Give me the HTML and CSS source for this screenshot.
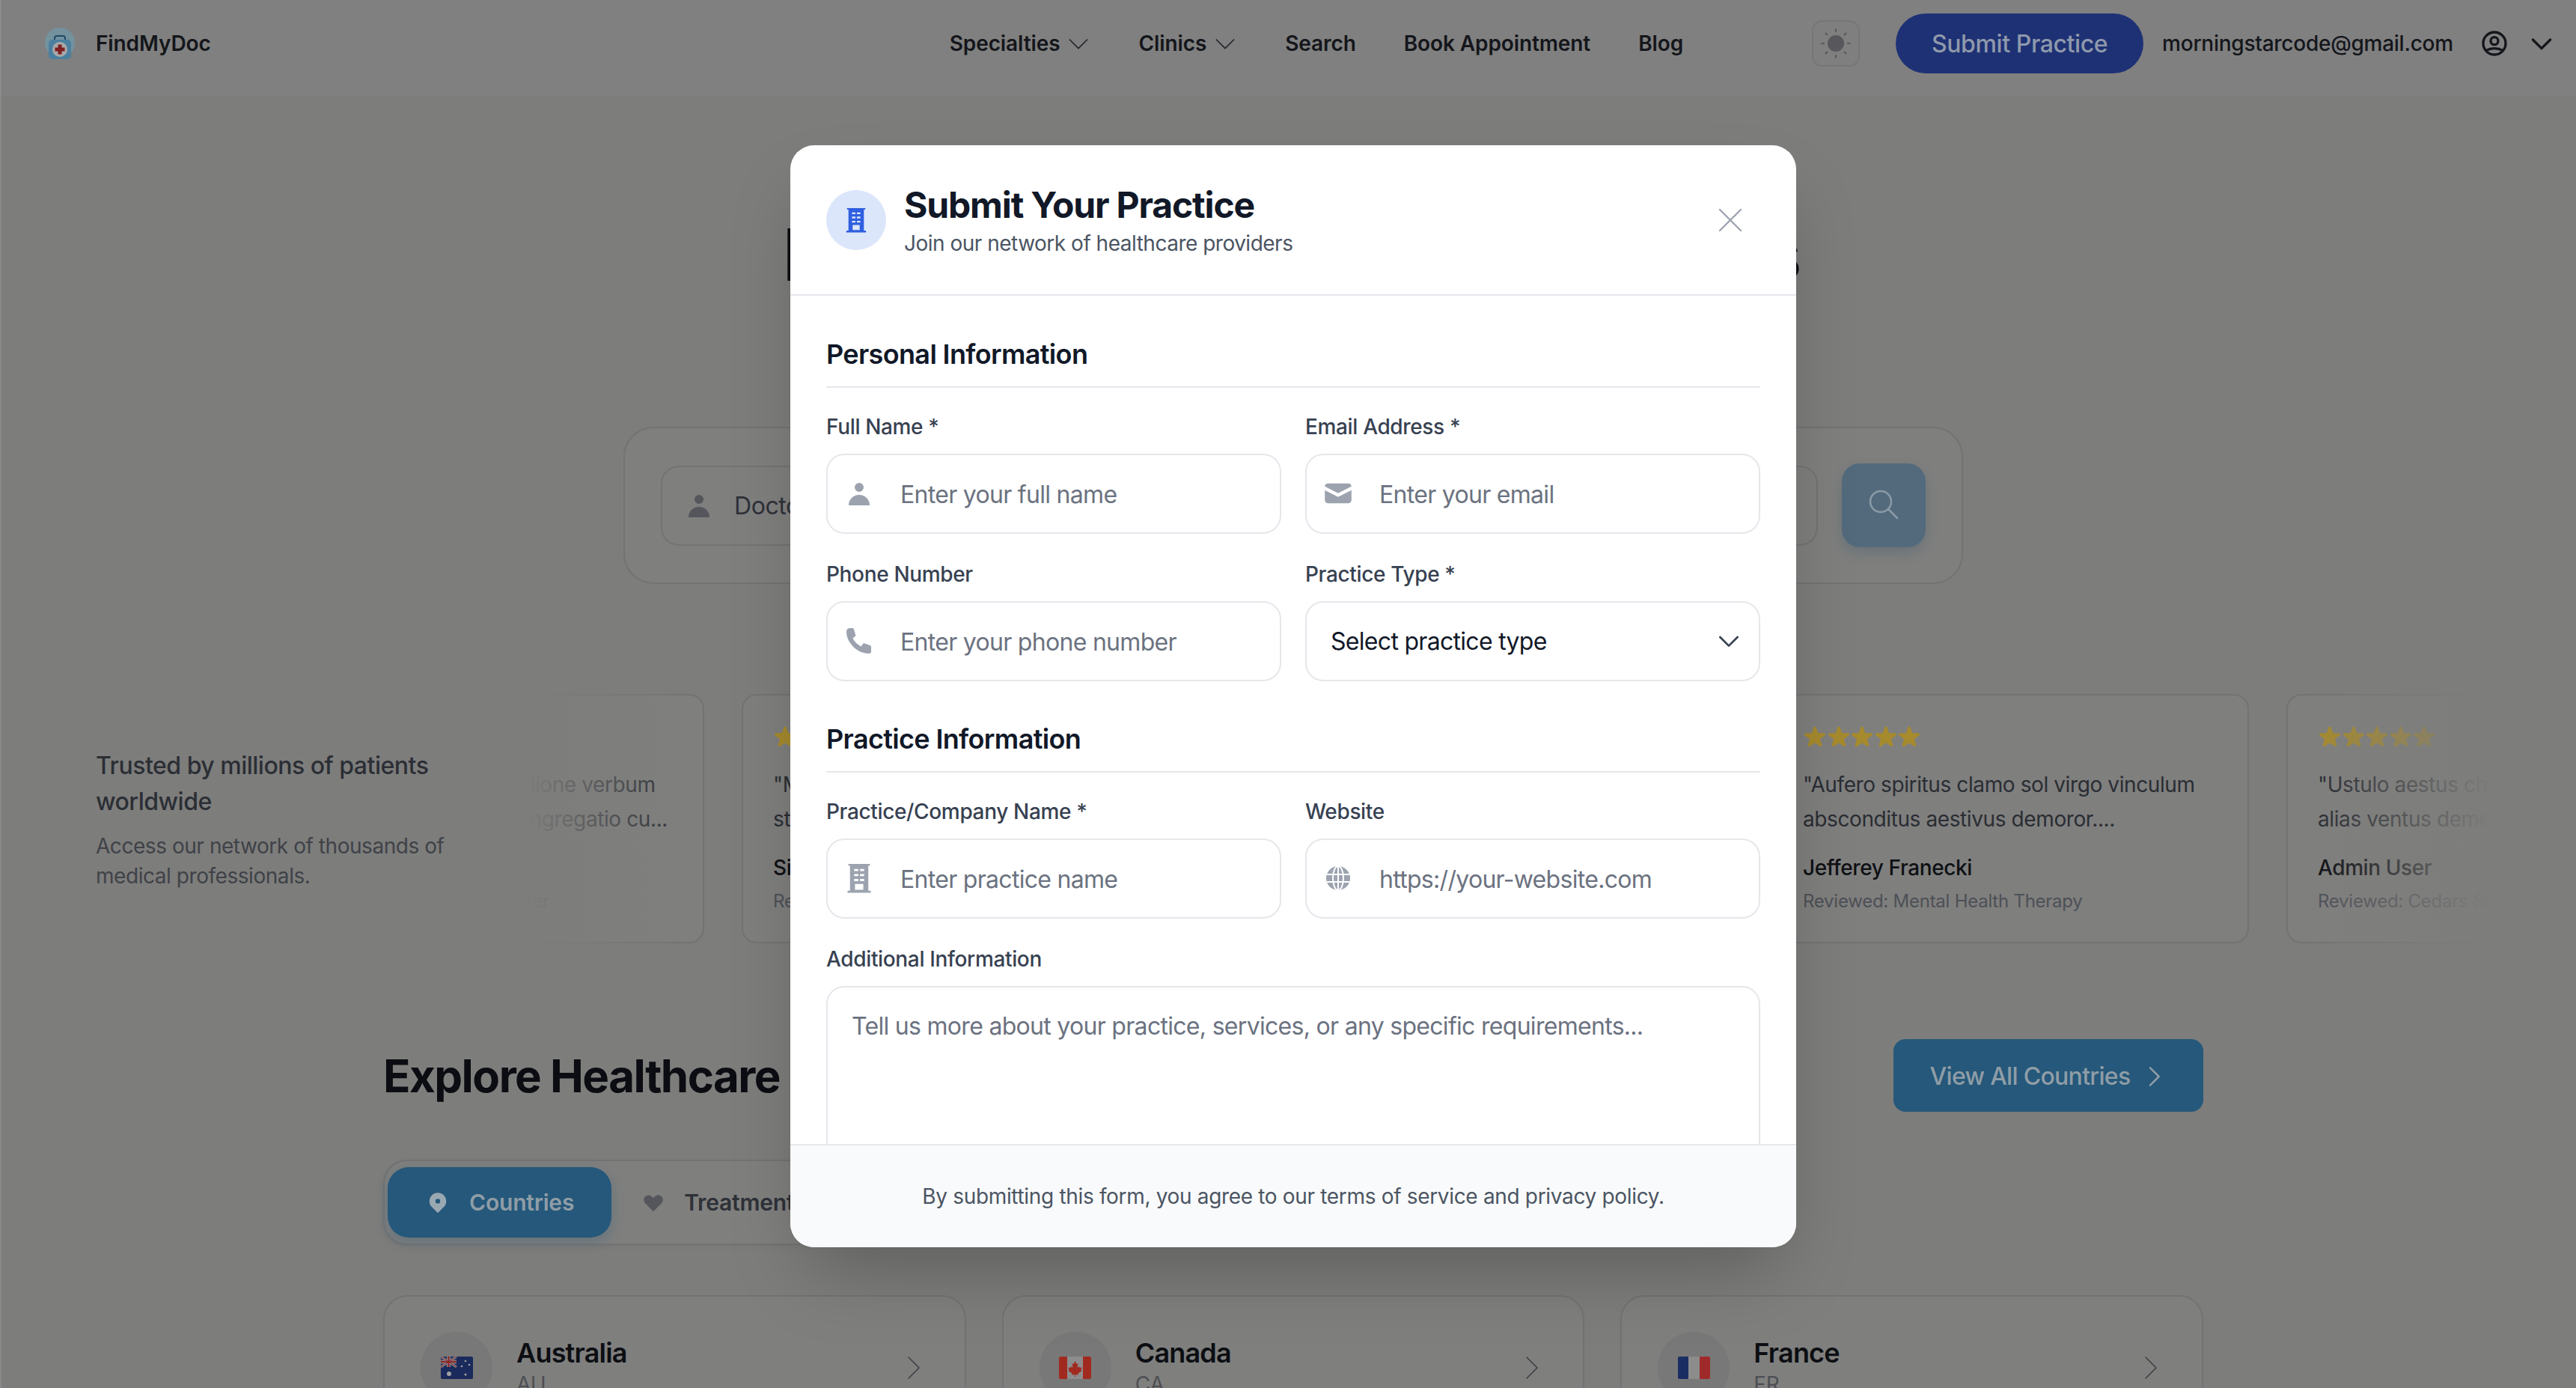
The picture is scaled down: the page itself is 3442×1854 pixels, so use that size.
FILE: index.html
```html
<!DOCTYPE html>
<html lang="en">
<head>
  <meta charset="UTF-8" />
  <title>FindMyDoc</title>
  <link rel="stylesheet" href="styles.css">
</head>
<body>
  <svg class="sprite" aria-hidden="true">
    <symbol id="i-user" viewBox="0 0 20 20"><path d="M10 9a3 3 0 100-6 3 3 0 000 6zm-7 9a7 7 0 1114 0H3z"/></symbol>
    <symbol id="i-mail" viewBox="1 1 18 18"><path d="M2.003 5.884L10 9.882l7.997-3.998A2 2 0 0016 4H4a2 2 0 00-1.997 1.884z"/><path d="M18 8.118l-8 4-8-4V14a2 2 0 002 2h12a2 2 0 002-2V8.118z"/></symbol>
    <symbol id="i-phone" viewBox="-2 -2 40 40"><path d="M5 1h4a2 2 0 012 2l2.500 8-4 3.500c2 4.500 6 8.500 11 11l3.500-4.500 8.500 3a2 2 0 011.500 2V32a3 3 0 01-3 3C15 35 1 20 1 6a5 5 0 014-5z"/></symbol>
    <symbol id="i-building" viewBox="0 0 32 36"><path fill-rule="evenodd" d="M3 1h26v2h-2v30h3v2.500H2V33h3V3H3V1zm7 6v2.500h5V7h-5zm7 0v2.500h5V7h-5zm-7 6v2.500h5V13h-5zm7 0v2.500h5V13h-5zm-7 6v2.500h5V19h-5zm7 0v2.500h5V19h-5zm-6 6v7h10v-7H11z"/></symbol>
    <symbol id="i-globe" viewBox="-4 -4 40 40"><circle cx="16" cy="16" r="16"/><ellipse cx="16" cy="16" rx="7" ry="16" fill="none" stroke="#fff" stroke-width="2"/><path d="M16 0v32M1 11h30M1 21h30" fill="none" stroke="#fff" stroke-width="2"/></symbol>
    <symbol id="i-star" viewBox="1.500 1.500 17 17"><path d="M9.049 2.927c.3-.921 1.603-.921 1.902 0l1.070 3.292a1 1 0 00.950.690h3.462c.969 0 1.371 1.240.588 1.810l-2.800 2.034a1 1 0 00-.364 1.118l1.070 3.292c.3.921-.755 1.688-1.540 1.118l-2.800-2.034a1 1 0 00-1.175 0l-2.800 2.034c-.784.570-1.838-.197-1.539-1.118l1.070-3.292a1 1 0 00-.364-1.118L2.980 8.720c-.783-.570-.380-1.810.588-1.810h3.461a1 1 0 00.951-.690l1.070-3.292z"/></symbol>
    <symbol id="i-down" viewBox="0 0 24 24"><path d="M19 9l-7 7-7-7" fill="none" stroke="currentColor" stroke-linecap="round" stroke-linejoin="round"/></symbol>
    <symbol id="i-right" viewBox="0 0 24 24"><path d="M9 5l7 7-7 7" fill="none" stroke="currentColor" stroke-linecap="round" stroke-linejoin="round"/></symbol>
  </svg>

  <div class="page">
    <header class="topbar">
      <a class="logo">
        <svg class="logo-mark" viewBox="0 0 40 42">
          <circle cx="20" cy="20" r="20" fill="#73929e"/>
          <path d="M13 17v-3a3 3 0 013-3h8a3 3 0 013 3v3" fill="none" stroke="#1f4a66" stroke-width="2"/>
          <rect x="5" y="16" width="30" height="26" rx="5" fill="#4b7f9f"/>
          <circle cx="20" cy="29" r="10" fill="#a9a9a9"/>
          <path d="M17.500 22.500h5v4h4v5h-4v4h-5v-4h-4v-5h4z" fill="#7e1f20"/>
        </svg>
        <span>FindMyDoc</span>
      </a>
      <nav class="nav">
        <a class="nav-item">Specialties <svg class="nav-chev"><use href="#i-down"/></svg></a>
        <a class="nav-item">Clinics <svg class="nav-chev"><use href="#i-down"/></svg></a>
        <a class="nav-item">Search</a>
        <a class="nav-item">Book Appointment</a>
        <a class="nav-item">Blog</a>
      </nav>
      <button class="theme-toggle">
        <svg viewBox="0 0 48 48" class="sun">
          <circle cx="24" cy="24" r="11"/>
          <path d="M24 5v3M24 40v3M5 24h3M40 24h3M10.500 10.500l2 2M35.500 35.500l2 2M10.500 37.500l2-2M35.500 12.500l2-2" fill="none" stroke="currentColor" stroke-width="2" stroke-linecap="round"/>
        </svg>
      </button>
      <button class="submit-btn">Submit Practice</button>
      <span class="account-email">morningstarcode@gmail.com</span>
      <svg class="account-icon" viewBox="0 0 24 24"><path d="M5.121 17.804A13.937 13.937 0 0112 16c2.500 0 4.847.655 6.879 1.804M15 10a3 3 0 11-6 0 3 3 0 016 0zm6 2a9 9 0 11-18 0 9 9 0 0118 0z" fill="none" stroke="currentColor" stroke-width="2" stroke-linecap="round" stroke-linejoin="round"/></svg>
      <svg class="account-chev"><use href="#i-down"/></svg>
    </header>

    <section class="hero">
      <h1>Find Your Perfect Doctors</h1>
      <p class="hero-sub">Connect with verified doctors and clinics near you</p>
      <div class="search-card">
        <div class="search-field">
          <svg class="search-field-icon"><use href="#i-user"/></svg>
          <span>Doctor name</span>
        </div>
        <div class="search-field"><span>Location</span></div>
        <button class="search-go">
          <svg viewBox="0 0 24 24"><path d="M21 21l-6-6m2-5a7 7 0 11-14 0 7 7 0 0114 0z" fill="none" stroke="currentColor" stroke-width="1.300" stroke-linecap="round"/></svg>
        </button>
      </div>
    </section>

    <section class="trust">
      <div class="trust-copy">
        <h2>Trusted by millions of patients worldwide</h2>
        <p>Access our network of thousands of medical professionals.</p>
      </div>
      <div class="reviews">
        <div class="reviews-track">
          <article class="review">
            <div class="stars"><svg><use href="#i-star"/></svg><svg><use href="#i-star"/></svg><svg><use href="#i-star"/></svg><svg><use href="#i-star"/></svg></div>
            <p class="review-text">"Tollo vicissitudo vilicus ad dione verbum<br>tempora aggero vero vita congregatio cu...</p>
            <p class="review-name">Mavis Okuneva</p>
            <p class="review-place">Reviewed: St. Mary Medical Center</p>
          </article>
          <article class="review">
            <div class="stars"><svg><use href="#i-star"/></svg><svg><use href="#i-star"/></svg><svg><use href="#i-star"/></svg><svg><use href="#i-star"/></svg><svg><use href="#i-star"/></svg></div>
            <p class="review-text">"Maiores stips thorax velum<br>strues adeo ventito...</p>
            <p class="review-name">Simone Hills</p>
            <p class="review-place">Reviewed: Dermatology</p>
          </article>
          <article class="review">
            <div class="stars"><svg><use href="#i-star"/></svg><svg><use href="#i-star"/></svg><svg><use href="#i-star"/></svg><svg><use href="#i-star"/></svg><svg><use href="#i-star"/></svg></div>
            <p class="review-text">"Cognatus tergo adipisci curis<br>theca vulgaris...</p>
            <p class="review-name">Lonnie Kuhn</p>
            <p class="review-place">Reviewed: Pediatrics</p>
          </article>
          <article class="review">
            <div class="stars"><svg><use href="#i-star"/></svg><svg><use href="#i-star"/></svg><svg><use href="#i-star"/></svg><svg><use href="#i-star"/></svg><svg><use href="#i-star"/></svg></div>
            <p class="review-text">"Aufero spiritus clamo sol virgo vinculum<br>absconditus aestivus demoror....</p>
            <p class="review-name">Jefferey Franecki</p>
            <p class="review-place">Reviewed: Mental Health Therapy</p>
          </article>
          <article class="review">
            <div class="stars"><svg><use href="#i-star"/></svg><svg><use href="#i-star"/></svg><svg><use href="#i-star"/></svg><svg><use href="#i-star"/></svg><svg><use href="#i-star"/></svg></div>
            <p class="review-text">"Ustulo aestus chirographum<br>alias ventus demens...</p>
            <p class="review-name">Admin User</p>
            <p class="review-place">Reviewed: Cedars Sinai</p>
          </article>
        </div>
        <div class="fade fade-left"></div>
        <div class="fade fade-right"></div>
      </div>
    </section>

    <section class="explore">
      <div class="explore-head">
        <h2>Explore Healthcare Worldwide</h2>
        <button class="view-all">View All Countries <svg><use href="#i-right"/></svg></button>
      </div>
      <div class="tabs">
        <button class="tab tab-active">
          <svg viewBox="0 0 20 20"><path fill-rule="evenodd" d="M5.050 4.050a7 7 0 119.900 9.900L10 18.900l-4.950-4.950a7 7 0 010-9.900zM10 11a2 2 0 100-4 2 2 0 000 4z"/></svg>
          Countries
        </button>
        <button class="tab">
          <svg viewBox="0 0 20 20"><path d="M3.172 5.172a4 4 0 015.656 0L10 6.343l1.172-1.171a4 4 0 115.656 5.656L10 17.657l-6.828-6.829a4 4 0 010-5.656z"/></svg>
          Treatments
        </button>
      </div>
      <div class="country-grid">
        <div class="country">
          <span class="flag-dot">
            <svg class="flag" viewBox="0 0 43 30">
              <rect width="43" height="30" fill="#1b2a5c"/>
              <path d="M0 0l21 14M21 0L0 14" stroke="#8a8a8a" stroke-width="3"/>
              <path d="M10.500 0v14M0 7h21" stroke="#8a8a8a" stroke-width="5"/>
              <path d="M10.500 0v14M0 7h21" stroke="#8e2b2f" stroke-width="2.500"/>
              <path d="M0 0l21 14M21 0L0 14" stroke="#8e2b2f" stroke-width="1"/>
              <circle cx="11" cy="23" r="3" fill="#a0a0a0"/>
              <circle cx="33" cy="6" r="1.300" fill="#a0a0a0"/><circle cx="28" cy="13" r="1.300" fill="#a0a0a0"/><circle cx="38" cy="11" r="1.300" fill="#a0a0a0"/><circle cx="33" cy="24" r="1.500" fill="#a0a0a0"/>
            </svg>
          </span>
          <div class="country-text"><strong>Australia</strong><span>AU</span></div>
          <svg class="country-chev"><use href="#i-right"/></svg>
        </div>
        <div class="country">
          <span class="flag-dot">
            <svg class="flag" viewBox="0 0 43 30">
              <rect width="43" height="30" fill="#8c8c8c"/>
              <rect width="11" height="30" fill="#a02a1f"/><rect x="32" width="11" height="30" fill="#a02a1f"/>
              <path d="M21.500 6l2 4 2-1-1 6 2.500-2 .5 2 3-.5-1 3.500 1 1-5 3.500.5 2-4-.5v3h-1v-3l-4 .5.5-2-5-3.500 1-1-1-3.500 3 .5.5-2 2.500 2-1-6 2 1z" fill="#a02a1f"/>
            </svg>
          </span>
          <div class="country-text"><strong>Canada</strong><span>CA</span></div>
          <svg class="country-chev"><use href="#i-right"/></svg>
        </div>
        <div class="country">
          <span class="flag-dot">
            <svg class="flag" viewBox="0 0 43 30">
              <rect width="43" height="30" fill="#8c8c8c"/>
              <rect width="14" height="30" fill="#1a2e63"/><rect x="29" width="14" height="30" fill="#a02a2a"/>
            </svg>
          </span>
          <div class="country-text"><strong>France</strong><span>FR</span></div>
          <svg class="country-chev"><use href="#i-right"/></svg>
        </div>
      </div>
    </section>

    <div class="modal">
      <div class="modal-head">
        <span class="modal-badge"><svg><use href="#i-building"/></svg></span>
        <div class="modal-title">
          <h2>Submit Your Practice</h2>
          <p>Join our network of healthcare providers</p>
        </div>
        <button class="modal-close">
          <svg viewBox="0 0 24 24"><path d="M6 18L18 6M6 6l12 12" fill="none" stroke="currentColor" stroke-width="1" stroke-linecap="round"/></svg>
        </button>
      </div>

      <form class="modal-body">
        <h3 class="form-section">Personal Information</h3>
        <div class="form-grid">
          <div class="field">
            <label>Full Name *</label>
            <div class="control"><svg class="control-icon"><use href="#i-user"/></svg><input type="text" placeholder="Enter your full name"></div>
          </div>
          <div class="field">
            <label>Email Address *</label>
            <div class="control"><svg class="control-icon"><use href="#i-mail"/></svg><input type="email" placeholder="Enter your email"></div>
          </div>
          <div class="field">
            <label>Phone Number</label>
            <div class="control"><svg class="control-icon"><use href="#i-phone"/></svg><input type="tel" placeholder="Enter your phone number"></div>
          </div>
          <div class="field">
            <label>Practice Type *</label>
            <div class="control">
              <select><option>Select practice type</option></select>
              <svg class="select-chev"><use href="#i-down"/></svg>
            </div>
          </div>
        </div>

        <h3 class="form-section form-section-next">Practice Information</h3>
        <div class="form-grid">
          <div class="field">
            <label>Practice/Company Name *</label>
            <div class="control"><svg class="control-icon"><use href="#i-building"/></svg><input type="text" placeholder="Enter practice name"></div>
          </div>
          <div class="field">
            <label>Website</label>
            <div class="control"><svg class="control-icon"><use href="#i-globe"/></svg><input type="url" placeholder="https://your-website.com"></div>
          </div>
          <div class="field field-wide">
            <label>Additional Information</label>
            <textarea placeholder="Tell us more about your practice, services, or any specific requirements..."></textarea>
          </div>
        </div>
      </form>

      <div class="modal-foot">By submitting this form, you agree to our terms of service and privacy policy.</div>
    </div>
  </div>
</body>
</html>
```

FILE: styles.css
```css
* {
  box-sizing: border-box;
}

html, body {
  margin: 0;
  height: 1854px;
  overflow: hidden;
}

body {
  font-family: 'Inter', sans-serif;
  background: #7d7d7b;
}

h1, h2, h3, p {
  margin: 0;
}

button {
  font-family: inherit;
  border: none;
  padding: 0;
  cursor: pointer;
}

.sprite {
  display: none;
}

/* the page sits behind the modal, so its colours are the dimmed ones */
.page {
  position: relative;
  width: 3456px;
  height: 1854px;
  overflow: hidden;
}

.page::before {
  content: "";
  position: absolute;
  top: 0;
  bottom: 0;
  left: 0;
  width: 2px;
  background: #8a8a8a;
}

/* top bar */
.topbar {
  height: 128px;
  background: #808080;
  display: flex;
  align-items: center;
  padding: 0 0 12px 60px;
  color: #14161b;
  font-size: 28px;
  font-weight: 600;
  letter-spacing: -0.1px;
}

.logo {
  display: flex;
  align-items: center;
  gap: 28px;
}

.logo-mark {
  width: 40px;
  height: 42px;
}

.nav {
  display: flex;
  align-items: center;
  gap: 64px;
  margin-left: 987px;
}

.nav-item {
  display: flex;
  align-items: center;
  gap: 5px;
}

.nav-chev {
  width: 40px;
  height: 40px;
  margin-right: -4px;
  stroke-width: 1;
  color: #24262c;
}

.theme-toggle {
  width: 64px;
  height: 62px;
  margin-left: 172px;
  background: #7f7f7f;
  border: 2px solid #767676;
  border-radius: 14px;
  color: #58585c;
  display: flex;
  align-items: center;
  justify-content: center;
}

.sun {
  width: 48px;
  height: 48px;
  fill: currentColor;
}

.submit-btn {
  height: 80px;
  width: 331px;
  margin-left: 48px;
  border-radius: 40px;
  background: #1e3175;
  color: #8f99ab;
  font-size: 32px;
  font-weight: 500;
  letter-spacing: -0.4px;
}

.account-email {
  margin-left: 25px;
  font-weight: 500;
  letter-spacing: -0.25px;
}

.account-icon {
  width: 40px;
  height: 40px;
  margin-left: 35px;
}

.account-chev {
  width: 40px;
  height: 40px;
  margin-left: 23px;
  stroke-width: 2;
}

/* hero */
.hero {
  padding-top: 157px;
  text-align: center;
}

/* only the two ends of the heading stick out from behind the modal */
.hero h1 {
  width: 1361px;
  margin-left: 1046px;
  font-size: 96px;
  line-height: 110px;
  font-weight: 700;
  text-align: justify;
  text-align-last: justify;
  color: #0b0d12;
}

.hero-sub {
  margin-top: 35px;
  font-size: 32px;
  line-height: 48px;
  color: #4a4d53;
}

.search-card {
  width: 1790px;
  height: 210px;
  margin: 92px auto 0;
  padding: 0 48px;
  display: flex;
  align-items: center;
  gap: 32px;
  background: #7f7f7e;
  border: 2px solid #737373;
  border-radius: 40px;
}

.search-field {
  flex: 1;
  height: 107px;
  display: flex;
  align-items: center;
  gap: 27px;
  padding-left: 29px;
  border: 2px solid #737373;
  border-radius: 24px;
  font-size: 32px;
  letter-spacing: -0.4px;
  color: #2e3138;
}

.search-field-icon {
  width: 40px;
  height: 40px;
  fill: #55565c;
}

.search-go {
  flex: none;
  width: 112px;
  height: 112px;
  border-radius: 24px;
  background: #536a7c;
  color: #8a9aa6;
  box-shadow: 0 8px 16px rgba(60, 90, 110, 0.3);
}

.search-go svg {
  width: 48px;
  height: 48px;
}

/* reviews strip */
.trust {
  margin-top: 147px;
  padding: 0 128px;
  display: flex;
  align-items: center;
}

.trust-copy {
  flex: 0 0 576px;
  padding: 2px 90px 0 0;
}

.trust-copy h2 {
  font-size: 32px;
  line-height: 48px;
  font-weight: 500;
  letter-spacing: -0.5px;
  color: #2b2e35;
}

.trust-copy p {
  margin-top: 15px;
  font-size: 28px;
  line-height: 40px;
  letter-spacing: -0.45px;
  color: #3f4248;
}

.reviews {
  position: relative;
  flex: 1;
  min-width: 0;
  overflow: hidden;
}

.reviews-track {
  display: flex;
  gap: 50px;
  margin-left: -401px;
}

.review {
  flex: 0 0 638px;
  height: 333px;
  padding: 40px;
  border: 2px solid #737373;
  border-radius: 20px;
  background: #7f7f7e;
  letter-spacing: -0.4px;
}

.stars {
  display: flex;
  height: 32px;
  fill: #a68a2e;
}

.stars svg {
  width: 32px;
  height: 32px;
  margin-right: -0.5px;
}

.review-text {
  margin-top: 24px;
  font-size: 28px;
  line-height: 46px;
  color: #2a2d33;
}

.review-name {
  margin-top: 22px;
  font-size: 28px;
  line-height: 40px;
  font-weight: 500;
  color: #0e1014;
}

.review-place {
  margin-top: 7px;
  font-size: 24px;
  line-height: 36px;
  letter-spacing: -0.25px;
  color: #4d5056;
}

.fade {
  position: absolute;
  top: 0;
  bottom: 0;
}

.fade-left {
  left: 0;
  width: 220px;
  background: linear-gradient(to right, #7d7d7b, rgba(125, 125, 123, 0));
}

.fade-right {
  right: 0;
  width: 240px;
  background: linear-gradient(to left, #7d7d7b, rgba(125, 125, 123, 0));
}

/* explore section */
.explore {
  width: 2432px;
  margin: 128px auto 0;
}

.explore-head {
  display: flex;
  align-items: center;
  justify-content: space-between;
}

.explore-head h2 {
  font-size: 60px;
  line-height: 72px;
  font-weight: 700;
  letter-spacing: -1.5px;
  color: #0b0d12;
}

.view-all {
  width: 414px;
  height: 97px;
  padding: 2px 0 0 3px;
  border-radius: 16px;
  background: #25587a;
  color: #8f9da7;
  font-size: 32px;
  font-weight: 500;
  letter-spacing: -0.7px;
  display: flex;
  align-items: center;
  justify-content: center;
  gap: 12px;
}

.view-all svg {
  width: 40px;
  height: 40px;
  stroke-width: 1.500;
}

.tabs {
  display: inline-flex;
  margin-top: 64px;
  padding: 8px 4px;
  background: #7f7f7e;
  border: 2px solid #737373;
  border-radius: 32px;
  box-shadow: 0 2px 6px rgba(0, 0, 0, 0.06);
}

.tab {
  height: 94px;
  padding: 0 36px 0 40px;
  display: flex;
  align-items: center;
  gap: 25px;
  background: none;
  border-radius: 28px;
  font-size: 30px;
  font-weight: 600;
  letter-spacing: -0.2px;
  color: #2e3138;
}

.tab svg {
  width: 32px;
  height: 32px;
  fill: #54565c;
}

.tab-active {
  background: #25587a;
  color: #8f9da7;
  gap: 26px;
  padding: 0 50px 0 51px;
  box-shadow: 0 6px 16px rgba(37, 88, 122, 0.3);
}

.tab-active svg {
  fill: #9aa8b2;
}

.country-grid {
  display: grid;
  grid-template-columns: repeat(3, 1fr);
  gap: 48px;
  margin-top: 67px;
}

.country {
  display: flex;
  align-items: center;
  gap: 32px;
  height: 194px;
  padding: 0 45px 0 48px;
  border: 2px solid #737373;
  border-radius: 32px;
  background: #7f7f7e;
}

.flag-dot {
  flex: none;
  width: 96px;
  height: 96px;
  border-radius: 50%;
  background: #787878;
  display: flex;
  align-items: center;
  justify-content: center;
}

.flag {
  width: 43px;
  height: 30px;
  border-radius: 2px;
}

.country-text {
  flex: 1;
  display: flex;
  flex-direction: column;
  margin-top: -4px;
}

.country-text strong {
  font-size: 36px;
  line-height: 48px;
  font-weight: 600;
  letter-spacing: -0.8px;
  color: #0c0e12;
}

.country-text span {
  font-size: 28px;
  line-height: 36px;
  color: #4d4f54;
}

.country-chev {
  width: 48px;
  height: 48px;
  stroke-width: 0.800;
  color: #3e4046;
}

/* modal over the page */
.modal {
  position: absolute;
  top: 194px;
  left: 1056px;
  width: 1344px;
  height: 1472px;
  display: flex;
  flex-direction: column;
  overflow: hidden;
  background: #fff;
  border-radius: 32px;
  box-shadow: 0 50px 100px -24px rgba(0, 0, 0, 0.25);
}

.modal-head {
  flex: none;
  height: 201px;
  padding: 0 60px 0 48px;
  display: flex;
  align-items: center;
  gap: 24px;
  border-bottom: 2px solid #e5e7eb;
}

.modal-badge {
  flex: none;
  width: 80px;
  height: 80px;
  border-radius: 50%;
  background: #dbe6fb;
  display: flex;
  align-items: center;
  justify-content: center;
  fill: #2f5fe0;
}

.modal-badge svg {
  width: 30px;
  height: 34px;
}

.modal-title {
  flex: 1;
  padding-top: 2px;
}

.modal-title h2 {
  font-size: 48px;
  line-height: 60px;
  font-weight: 700;
  letter-spacing: -1.15px;
  color: #111827;
}

.modal-title p {
  margin-top: 1px;
  font-size: 28px;
  line-height: 40px;
  letter-spacing: -0.5px;
  color: #4b5563;
}

.modal-close {
  width: 56px;
  height: 56px;
  background: none;
  color: #9ca3af;
}

.modal-body {
  flex: 1;
  min-height: 0;
  overflow: hidden;
  padding: 50px 48px 0;
}

.form-section {
  padding-bottom: 15px;
  border-bottom: 2px solid #e5e7eb;
  font-size: 36px;
  line-height: 56px;
  font-weight: 600;
  letter-spacing: -0.65px;
  color: #111827;
}

.form-section-next {
  margin-top: 49px;
}

.form-grid {
  display: grid;
  grid-template-columns: 1fr 1fr;
  gap: 34px 32px;
  margin-top: 32px;
}

.field label {
  display: block;
  margin-bottom: 16px;
  font-size: 28px;
  line-height: 40px;
  font-weight: 500;
  letter-spacing: -0.35px;
  color: #374151;
}

.field-wide {
  grid-column: 1 / -1;
}

.control {
  position: relative;
}

.control input, .control select, .field textarea {
  display: block;
  width: 100%;
  border: 2px solid #e5e7eb;
  border-radius: 24px;
  background: #fff;
  font-family: inherit;
  font-size: 32px;
  letter-spacing: -0.7px;
  color: #111827;
  outline: none;
}

.control input {
  height: 107px;
  padding: 2px 0 0 97px;
}

.control select {
  height: 107px;
  padding-left: 32px;
  appearance: none;
}

.field textarea {
  height: 320px;
  padding: 32px;
  line-height: 40px;
  resize: none;
}

::placeholder {
  color: #6b7280;
  opacity: 1;
}

.control-icon {
  position: absolute;
  top: 33px;
  left: 24px;
  width: 40px;
  height: 40px;
  fill: #9ca3af;
}

.select-chev {
  position: absolute;
  top: 33px;
  right: 22px;
  width: 40px;
  height: 40px;
  stroke-width: 1.600;
  color: #374151;
}

.modal-foot {
  flex: none;
  height: 138px;
  display: flex;
  align-items: center;
  justify-content: center;
  background: #f9fafb;
  border-top: 2px solid #e5e7eb;
  font-size: 28px;
  letter-spacing: -0.33px;
  color: #4b5563;
}
```
